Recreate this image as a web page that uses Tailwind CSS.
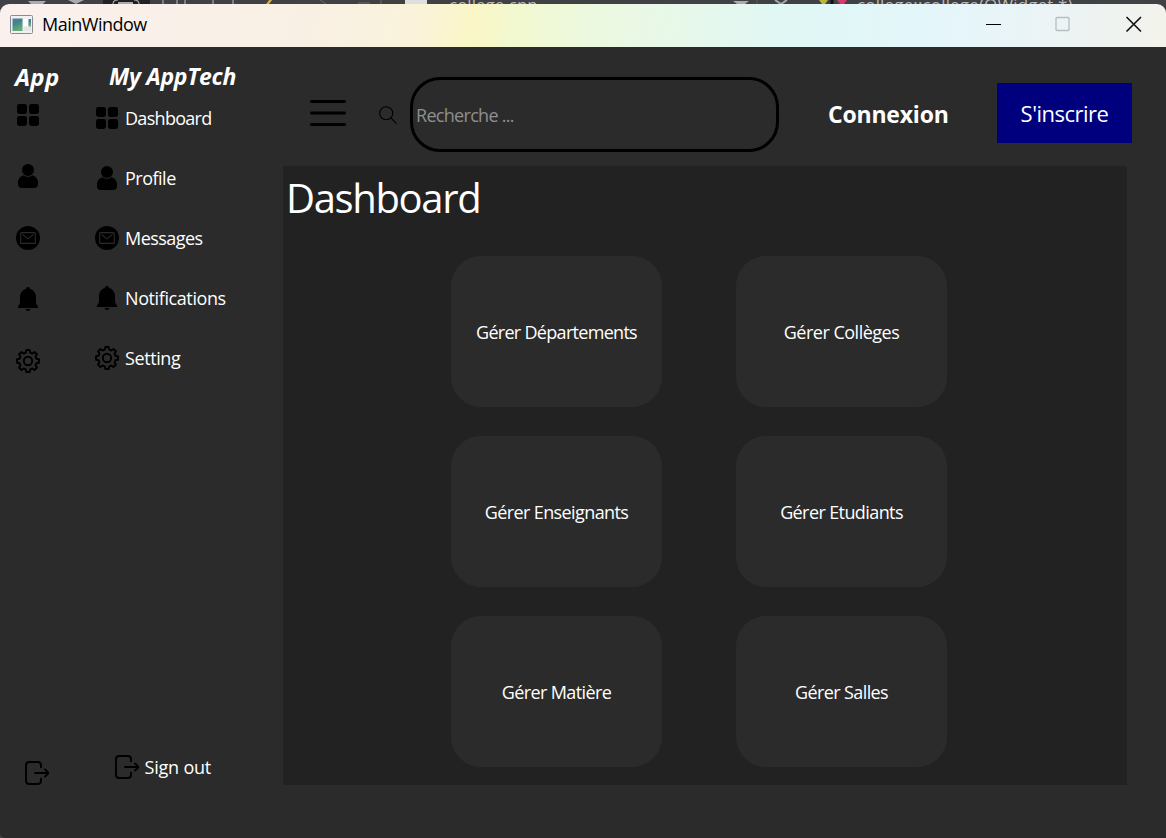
<!DOCTYPE html>
<html lang="fr">
<head>
<meta charset="utf-8">
<title>MainWindow</title>
<script src="https://cdn.jsdelivr.net/npm/@tailwindcss/browser@4"></script>
</head>
<body class="w-[1166px] h-[838px] overflow-hidden bg-[#3f4043] font-['Open_Sans','Noto_Sans',sans-serif] text-white">
<svg width="0" height="0" class="absolute">
  <defs>
    <symbol id="grid" viewBox="0 0 24 24"><rect x="1" y="1" width="10" height="10" rx="2.4"/><rect x="13" y="1" width="10" height="10" rx="2.4"/><rect x="1" y="13" width="10" height="10" rx="2.4"/><rect x="13" y="13" width="10" height="10" rx="2.4"/></symbol>
    <symbol id="user" viewBox="0 0 24 24"><circle cx="12" cy="6" r="6"/><path d="M7.6 11.2C4.300 12 2 15 2 18.500v1.700C2 22.500 3.500 24 5.700 24h12.600c2.200 0 3.700-1.500 3.700-3.800v-1.700c0-3.500-2.300-6.500-5.600-7.300C15.200 12.200 13.700 12.800 12 12.800s-3.200-.6-4.400-1.600z"/></symbol>
    <symbol id="mail" viewBox="0 0 24 24"><circle cx="12" cy="12" r="12"/><rect x="4.700" y="6.600" width="14.600" height="10.800" rx="1" fill="none" stroke="#2b2b2b" stroke-width="1.100"/><path d="M6.500 8.300l5.500 4.600 5.500-4.600" fill="none" stroke="#2b2b2b" stroke-width="1.100"/></symbol>
    <symbol id="bell" viewBox="0 0 24 24"><path d="M12 0c1.300 0 2 .7 2.100 1.900C17.700 2.900 20 6 20 9.700V15c0 1.500.6 2.800 1.700 3.900.9.900.5 2.100-.7 2.100H3c-1.200 0-1.600-1.200-.7-2.100C3.400 17.800 4 16.500 4 15V9.700C4 6 6.300 2.900 9.900 1.900 10 .7 10.700 0 12 0z"/><path d="M9.600 22h4.800c-.3 1.300-1.200 2-2.400 2s-2.100-.7-2.400-2z"/></symbol>
    <symbol id="gear" viewBox="0 0 24 24"><g fill="none" stroke="#000" stroke-width="1.900" stroke-linejoin="round"><circle cx="12" cy="12" r="4.200"/><path d="M9.800 3.600L10.300 1h3.400l.5 2.600 2.200.9 2.100-1.500 2.500 2.500-1.500 2.100.9 2.200 2.600.5v3.400l-2.600.5-.9 2.200 1.500 2.100-2.500 2.500-2.100-1.500-2.200.9-.5 2.600h-3.400l-.5-2.600-2.200-.9-2.100 1.500L3 18.500l1.500-2.100-.9-2.200L1 13.700v-3.400l2.600-.5.9-2.200L3 5.500 5.500 3l2.100 1.500z"/></g></symbol>
    <symbol id="exit" viewBox="0 0 24 24"><g fill="none" stroke="#000" stroke-width="1.900" stroke-linecap="round" stroke-linejoin="round"><path d="M16 6.200V4.300C16 2.300 14.700 1 12.700 1H4.300C2.300 1 1 2.300 1 4.300v15.400C1 21.700 2.300 23 4.300 23h8.400c2 0 3.300-1.300 3.300-3.300v-1.900M10 12h12.800M20 8.400l3 3q.6.600 0 1.200l-3 3"/></g></symbol>
  </defs>
</svg>
<div class="flex h-full flex-col">
  <!-- sliver of the editor behind the window -->
  <div class="relative h-[4px] shrink-0">
    <svg class="absolute top-0 left-0" width="1166" height="12">
      <rect width="1166" height="12" fill="#404144"/>
      <rect x="103" width="47" height="4" fill="#202123"/>
      <path d="M28 1h18l-4 4h-10zM68 0h16l-8 4z" fill="#aaabad"/>
      <g fill="none" stroke="#a6a7a9" stroke-width="1.200"><path d="M113 4q0-4 5-4M139 4q0-4-5-4M163 0v5M177 0v5M185 0v5M213 4V0M233 4V0"/></g>
      <path d="M118 2h15v2h-15z" fill="#aaa"/>
      <path d="M266 4l4-5h3l-4 5z" fill="#d8b130"/>
      <path d="M320 0l6 4M358 3h12M381 0v4" stroke="#5b5c5f" stroke-width="1.500"/>
      <rect x="405" width="22" height="4" fill="#dededf"/>
      <path d="M733 1h16l-4 3h-8z" fill="#aaabad"/><path d="M757 0v4" stroke="#5b5c5f"/>
      <path d="M775 0l6 4 6-4" stroke="#a6a7a9" stroke-width="2" fill="none"/>
      <path d="M819 0h9l-3 4h-3z" fill="#b9b63c"/><path d="M832 0v4" stroke="#111" stroke-width="3"/><path d="M837 0h10l-3 4h-4z" fill="#d8386c"/>
    </svg>
    <div class="absolute top-0 left-0 h-[12px] w-full overflow-hidden text-[17px] leading-[16px] text-[#b8b9bb]">
      <span class="absolute top-[-3px] left-[449px] whitespace-nowrap">college.cpp</span>
      <span class="absolute top-[-3px] left-[857px] whitespace-nowrap tracking-[0.150px]">college::college(QWidget *)</span>
    </div>
  </div>
  <div class="relative flex min-h-0 flex-1 flex-col overflow-hidden rounded-t-[9px] rounded-bl-[5px] bg-[#2b2b2b]">
    <header class="flex h-[43px] shrink-0 items-center bg-[linear-gradient(97deg,#faf0ee_0%,#f9f0e5_26%,#faf3da_36%,#faf6c6_40.500%,#f2f8cf_44%,#ecf8e0_51%,#e6f8ec_60%,#e0f7f5_68%,#e4f6fa_80%,#eaf4f7_88%,#f0f2ee_97%,#f3f3eb_100%)] pl-[10px] text-black">
      <svg width="23" height="19" viewBox="0 0 23 19" class="mt-[-3px]"><defs><linearGradient id="pic" x2="0.4" y2="1"><stop stop-color="#4b8399"/><stop offset=".4" stop-color="#46818f"/><stop offset="1" stop-color="#64ad76"/></linearGradient></defs><rect x=".5" y=".5" width="22" height="18" rx="1" fill="#f1f1f4" stroke="#898c92"/><rect x="2.500" y="3.500" width="10" height="12.500" fill="url(#pic)"/><rect x="13.500" y="4" width="4.500" height="7" fill="#fff"/><rect x="18.500" y="4" width="2.500" height="7.500" fill="url(#pic)"/><rect x="13.500" y="12" width="7.500" height="4" fill="#e5e6e9"/></svg>
      <span class="ml-[9px] mt-[-2px] text-[18px] tracking-[-0.5px]">MainWindow</span>
      <svg class="ml-auto mr-[24px] mt-[-3px]" width="158" height="18" viewBox="0 0 158 18" fill="none"><path d="M2 9.500h15" stroke="#000" stroke-width="1.200"/><rect x="72" y="2.500" width="13" height="13" rx="1" stroke="#b4bfc0" stroke-width="1.300"/><path d="M142.500 2l14.500 14.500M157 2l-14.500 14.500" stroke="#111" stroke-width="1.600"/></svg>
    </header>
    <div class="flex min-h-0 flex-1">
      <aside class="flex w-[90px] flex-col pt-[14px] pb-[53px] pl-[14px]">
        <h2 class="h-[34px] pl-px text-[24px] leading-[31px] font-bold italic tracking-[0.3px]">App</h2>
        <nav class="flex flex-col gap-[37.500px] pt-[7.500px] pl-[2px]">
          <svg class="size-6"><use href="#grid"/></svg>
          <svg class="size-6"><use href="#user"/></svg>
          <svg class="size-6"><use href="#mail"/></svg>
          <svg class="size-6"><use href="#bell"/></svg>
          <svg class="size-6"><use href="#gear"/></svg>
        </nav>
        <svg class="mt-auto ml-[11px] size-6"><use href="#exit"/></svg>
      </aside>
      <aside class="flex w-[193px] flex-col pt-[14px] pb-[59px] pl-[5px]">
        <h2 class="h-[34px] pl-[14px] text-[23px] leading-[30px] font-bold italic whitespace-nowrap tracking-[-0.300px]">My AppTech</h2>
        <nav class="flex flex-col gap-9 pt-[11px] text-[18px] leading-6 tracking-[-0.4px]">
          <a class="flex h-6 items-center gap-1.5 tracking-[-0.700px]"><svg class="size-6"><use href="#grid"/></svg>Dashboard</a>
          <a class="flex h-6 items-center gap-1.5 tracking-[-0.500px]"><svg class="size-6"><use href="#user"/></svg>Profile</a>
          <a class="flex h-6 items-center gap-1.5 tracking-[-0.550px]"><svg class="size-6"><use href="#mail"/></svg>Messages</a>
          <a class="flex h-6 items-center gap-1.5"><svg class="size-6"><use href="#bell"/></svg>Notifications</a>
          <a class="flex h-6 items-center gap-1.5"><svg class="size-6"><use href="#gear"/></svg>Setting</a>
        </nav>
        <a class="mt-auto flex h-6 items-center gap-[5.500px] pl-5 text-[18px] tracking-[-0.200px]"><svg class="size-6"><use href="#exit"/></svg>Sign out</a>
      </aside>
      <main class="flex w-[883px] flex-col">
        <div class="flex h-[119px] items-center pt-[16px] pl-[27px]">
          <svg width="36" height="26" viewBox="0 0 36 26" class="mt-[-4px]"><path d="M1.500 1.500h33M1.500 13h33M1.500 24.500h33" stroke="#000" stroke-width="3" stroke-linecap="round"/></svg>
          <svg width="18" height="18" viewBox="0 0 18 18" class="ml-[33px]" fill="none" stroke="#000" stroke-width="1.100"><circle cx="7.200" cy="7.200" r="6.500"/><path d="M11.800 11.800l5.500 5.500" stroke-linecap="round"/></svg>
          <div class="ml-[13px] flex h-[75px] w-[369px] items-center rounded-[30px] border-[3px] border-black pt-[2px] pl-[3px] text-[18px] tracking-[-0.700px] text-[#8f8f8f]">Recherche ...</div>
          <span class="ml-[49px] w-[120px] text-[23px] font-bold whitespace-nowrap tracking-[-0.200px]">Connexion</span>
          <button class="ml-[49px] mt-[-3px] h-[60px] w-[135px] bg-[#00007f] text-[22px] tracking-[-0.5px]">S'inscrire</button>
        </div>
        <section class="h-[619px] w-[844px] bg-[#222222] pl-[3px]">
          <h1 class="h-[90px] pt-[2px] text-[40px] leading-[60px] tracking-[-1.350px]">Dashboard</h1>
          <div class="grid grid-cols-[211px_211px] auto-rows-[151px] gap-x-[74px] gap-y-[29px] pl-[165px] text-[18px] tracking-[-0.600px]">
            <div class="flex items-center justify-center rounded-[30px] bg-[#2b2b2b] pt-[2px] tracking-[-0.700px]">Gérer Départements</div>
            <div class="flex items-center justify-center rounded-[30px] bg-[#2b2b2b] pt-[2px] tracking-[-0.500px]">Gérer Collèges</div>
            <div class="flex items-center justify-center rounded-[30px] bg-[#2b2b2b] pt-[2px]">Gérer Enseignants</div>
            <div class="flex items-center justify-center rounded-[30px] bg-[#2b2b2b] pt-[2px]">Gérer Etudiants</div>
            <div class="flex items-center justify-center rounded-[30px] bg-[#2b2b2b] pt-[2px]">Gérer Matière</div>
            <div class="flex items-center justify-center rounded-[30px] bg-[#2b2b2b] pt-[2px]">Gérer Salles</div>
          </div>
        </section>
      </main>
    </div>
  </div>
</div>
</body>
</html>
